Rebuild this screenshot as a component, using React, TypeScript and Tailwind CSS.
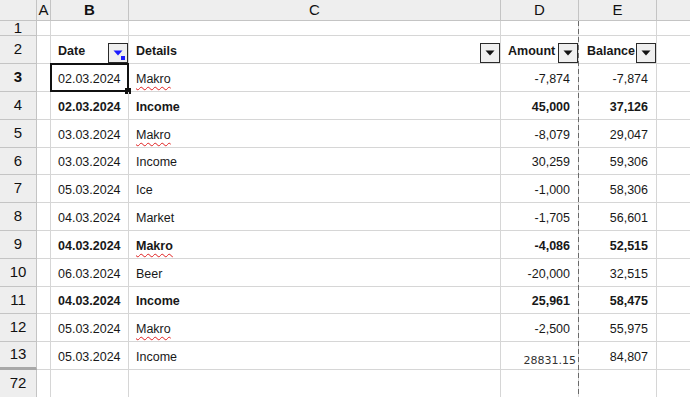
import React from "react";

type Row = {
  n: number;
  date: string;
  det: string;
  amt: string;
  bal: string;
  bold?: boolean;
  wavy?: boolean;
  h: string;
  special?: boolean;
};

const rows: Row[] = [
  { n: 3, date: "02.03.2024", det: "Makro", amt: "-7,874", bal: "-7,874", wavy: true, h: "h-[28px]" },
  { n: 4, date: "02.03.2024", det: "Income", amt: "45,000", bal: "37,126", bold: true, h: "h-[28px]" },
  { n: 5, date: "03.03.2024", det: "Makro", amt: "-8,079", bal: "29,047", wavy: true, h: "h-[28px]" },
  { n: 6, date: "03.03.2024", det: "Income", amt: "30,259", bal: "59,306", h: "h-[27px]" },
  { n: 7, date: "05.03.2024", det: "Ice", amt: "-1,000", bal: "58,306", h: "h-[28px]" },
  { n: 8, date: "04.03.2024", det: "Market", amt: "-1,705", bal: "56,601", h: "h-[28px]" },
  { n: 9, date: "04.03.2024", det: "Makro", amt: "-4,086", bal: "52,515", bold: true, wavy: true, h: "h-[28px]" },
  { n: 10, date: "06.03.2024", det: "Beer", amt: "-20,000", bal: "32,515", h: "h-[28px]" },
  { n: 11, date: "04.03.2024", det: "Income", amt: "25,961", bal: "58,475", bold: true, h: "h-[27px]" },
  { n: 12, date: "05.03.2024", det: "Makro", amt: "-2,500", bal: "55,975", wavy: true, h: "h-[28px]" },
  { n: 13, date: "05.03.2024", det: "Income", amt: "28831.15", bal: "84,807", special: true, h: "h-[28px]" },
];

const font = { fontFamily: '"Liberation Sans", Arial, sans-serif' };

function DropButton({ active }: { active?: boolean }) {
  return (
    <div className="relative w-[20px] h-[20px] shrink-0 bg-[#efefef] border border-[#2a2a2a] flex items-center justify-center">
      <svg width="10" height="6" viewBox="0 0 10 6">
        <polygon points="0.5,0.5 9.5,0.5 5,5.5" fill={active ? "#1a1aff" : "#111"} />
      </svg>
      {active && <div className="absolute right-[2px] bottom-[2px] w-[4px] h-[4px] bg-[#1a1aff]" />}
    </div>
  );
}

const hdrCell = "flex items-center justify-center bg-[#eeeeee] border-r border-b border-[#c4c4c4] text-[15px] text-[#111]";
const rowHdr = "w-[37px] shrink-0 flex items-center justify-center bg-[#eeeeee] border-r border-b border-[#c4c4c4] text-[15px] text-[#111]";
const base = "shrink-0 border-r border-b border-[#d6d6d6] flex items-end text-[12.5px] leading-[15px] text-[#181818] whitespace-nowrap";
const cell = `${base} pb-[4px]`;

export default function App() {
  return (
    <div className="w-[690px] h-[397px] overflow-hidden bg-white relative" style={font}>
      {/* Column header */}
      <div className="flex h-[21px]">
        <div className={`w-[37px] shrink-0 ${hdrCell}`} />
        <div className={`w-[14px] shrink-0 ${hdrCell}`}>A</div>
        <div className={`w-[78px] shrink-0 ${hdrCell} bg-[#b4d5f7] font-bold`}>B</div>
        <div className={`w-[372px] shrink-0 ${hdrCell}`}>C</div>
        <div className={`w-[78px] shrink-0 ${hdrCell}`}>D</div>
        <div className={`w-[78px] shrink-0 ${hdrCell}`}>E</div>
        <div className={`flex-1 ${hdrCell} border-r-0`} />
      </div>

      {/* Row 1 */}
      <div className="flex h-[15px]">
        <div className={rowHdr}>1</div>
        <div className={`w-[14px] ${cell}`} />
        <div className={`w-[78px] ${cell}`} />
        <div className={`w-[372px] ${cell}`} />
        <div className={`w-[78px] ${cell}`} />
        <div className={`w-[78px] ${cell}`} />
        <div className={`flex-1 ${cell} border-r-0`} />
      </div>

      {/* Row 2: headers */}
      <div className="flex h-[28px]">
        <div className={rowHdr}>2</div>
        <div className={`w-[14px] ${cell}`} />
        <div className={`w-[78px] ${base} font-bold`}>
          <span className="pl-[7px] pb-[4px] flex-1">Date</span>
          <DropButton active />
        </div>
        <div className={`w-[372px] ${base} font-bold`}>
          <span className="pl-[7px] pb-[4px] flex-1">Details</span>
          <DropButton />
        </div>
        <div className={`w-[78px] ${base} font-bold`}>
          <span className="pl-[7px] pb-[4px] flex-1">Amount</span>
          <DropButton />
        </div>
        <div className={`w-[78px] ${base} font-bold`}>
          <span className="pl-[8px] pb-[4px] flex-1">Balance</span>
          <DropButton />
        </div>
        <div className={`flex-1 ${cell} border-r-0`} />
      </div>

      {rows.map((r) => (
        <div key={r.n} className={`flex ${r.h}`}>
          <div
            className={`${rowHdr} ${r.n === 3 ? "bg-[#b4d5f7] font-bold" : ""} ${
              r.n === 13 ? "border-b-[3px] border-b-[#a8a8a8]" : ""
            }`}
          >
            {r.n}
          </div>
          <div className={`w-[14px] ${cell}`} />
          <div className={`w-[78px] ${cell} relative pl-[7px] ${r.bold ? "font-bold" : ""}`}>
            {r.date}
            {r.n === 3 && (
              <>
                <div className="absolute left-[-1px] top-[-1px] right-[-1px] bottom-[-1px] border-2 border-[#111]" />
                <div className="absolute right-[-3px] bottom-[-3px] w-[6px] h-[6px] bg-[#111]" />
              </>
            )}
          </div>
          <div className={`w-[372px] ${cell} pl-[7px] ${r.bold ? "font-bold" : ""}`}>
            {r.wavy ? (
              <span className="underline decoration-wavy decoration-[#e02020] decoration-1 underline-offset-[3px]">
                {r.det}
              </span>
            ) : (
              r.det
            )}
          </div>
          {r.special ? (
            <div className={`w-[78px] ${base} justify-end pr-[2px] pb-[1px]`}>
              <span className="text-[11px] text-[#333]" style={{ fontFamily: '"DejaVu Sans", sans-serif' }}>
                {r.amt}
              </span>
            </div>
          ) : (
            <div className={`w-[78px] ${cell} justify-end pr-[8px] ${r.bold ? "font-bold" : ""}`}>{r.amt}</div>
          )}
          <div className={`w-[78px] ${cell} justify-end pr-[8px] ${r.bold ? "font-bold" : ""}`}>{r.bal}</div>
          <div className={`flex-1 ${cell} border-r-0`} />
        </div>
      ))}

      {/* Row 72 */}
      <div className="flex h-[28px]">
        <div className={rowHdr}>72</div>
        <div className={`w-[14px] ${cell}`} />
        <div className={`w-[78px] ${cell}`} />
        <div className={`w-[372px] ${cell}`} />
        <div className={`w-[78px] ${cell}`} />
        <div className={`w-[78px] ${cell}`} />
        <div className={`flex-1 ${cell} border-r-0`} />
      </div>

      {/* Page break dashed line */}
      <div className="absolute left-[578px] top-[21px] bottom-0 w-[1px] bg-[repeating-linear-gradient(to_bottom,#6a6a6a_0px,#6a6a6a_5px,transparent_5px,transparent_8px)]" />
    </div>
  );
}
